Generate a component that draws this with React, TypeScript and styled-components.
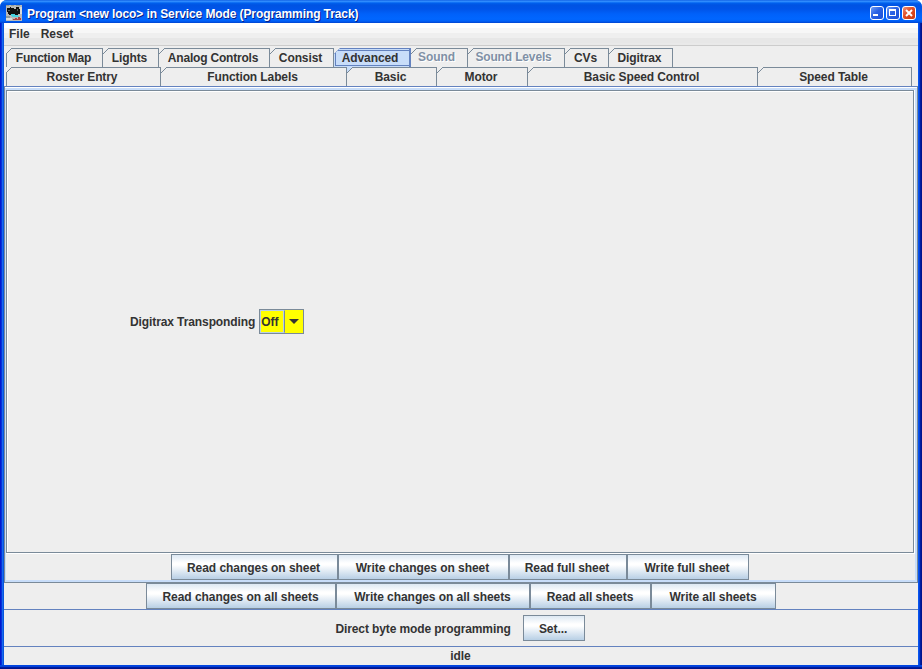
import React from "react";
import styled, { createGlobalStyle, css } from "styled-components";

const Global = createGlobalStyle`
  * { box-sizing: border-box; }
  html, body { margin: 0; background: #fff; overflow: hidden; }
`;

const Frame = styled.div`
  width: 922px;
  height: 669px;
  padding: 0 4px 4px;
  display: flex;
  flex-direction: column;
  overflow: hidden;
  border-radius: 7px 7px 0 0;
  background:
    linear-gradient(to right, #0019cf 0 1px, #0831d9 1px 2px, #166aee 2px 3px, #0855dd 3px 4px) 0 23px / 4px 642px no-repeat,
    linear-gradient(to right, #0855ee 0 1px, #0441d8 1px 2px, #001da0 2px 3px, #00138c 3px 4px) 918px 23px / 4px 642px no-repeat,
    linear-gradient(#0046e0 0 1px, #0441d8 1px 2px, #001da0 2px 3px, #00138c 3px 4px) 0 665px / 922px 4px no-repeat,
    #0055ea;
  font: bold 12px/14px "Liberation Sans", Arial, sans-serif;
  letter-spacing: -0.1px;
  color: #333;
  white-space: nowrap;
`;

const TitleBar = styled.header`
  flex: 0 0 23px;
  margin: 0 -4px;
  padding: 3px 6px 0;
  display: flex;
  align-items: center;
  background: linear-gradient(#0050dd 0, #3b94ff 1px, #2182fb 2px, #0060ee 3px, #0053e3 5px, #0054e8 9px, #0061fa 14px, #0066ff 19px, #0060f8 21px, #0043cf 23px);
`;

const Title = styled.h1`
  margin: 2px auto 0 5px;
  font: bold 12px/16px "Liberation Sans", Arial, sans-serif;
  letter-spacing: -0.1px;
  color: #fff;
  text-shadow: 1px 1px 0 #0a1f84;
`;

const WindowButton = styled.button<{ $close?: boolean }>`
  width: 14px;
  height: 14px;
  margin: 0 0 1px 2px;
  padding: 0;
  border: 1px solid #fff;
  border-radius: 3px;
  background: ${(p) =>
    p.$close
      ? "linear-gradient(135deg, #f09078, #e04c22 45%, #c83a10)"
      : "linear-gradient(135deg, #6f9df5, #2a62e4 45%, #1c4fd6)"};
  svg { display: block; }
`;

const MenuBar = styled.nav`
  flex: 0 0 23px;
  display: flex;
  gap: 11px;
  padding: 4px 5px;
  letter-spacing: 0;
  background: linear-gradient(#fff 0 5px, #f7f7f7 5px 10px, #efefef 10px 15px, #e7e7e7 15px 20px, #e9e9e9 20px 22px, #ccc 22px);
`;

const Body = styled.main`
  flex: 1;
  min-height: 0;
  padding-top: 2px;
  display: flex;
  flex-direction: column;
  background: #eee;
`;

const TabRow = styled.div<{ $columns: string }>`
  display: grid;
  grid-template-columns: ${(p) => p.$columns};
  height: 19px;
  margin-left: 2px;
`;

const TabItem = styled.div<{ $selected?: boolean; $disabled?: boolean }>`
  position: relative;
  display: flex;
  justify-content: center;
  padding: 3px 2px 0 0;
  border-right: 1px solid #7a8a99;
  background: linear-gradient(#7a8a99, #7a8a99) 6px 0 / 100% 1px no-repeat;
  &:first-child::after {
    content: "";
    position: absolute;
    left: 0;
    top: 6px;
    bottom: 0;
    border-left: 1px solid #7a8a99;
  }
  svg { position: absolute; left: 0; top: 0; }
  ${(p) => p.$selected && css`
    border-right: 2px solid #6382bf;
    background:
      linear-gradient(#6382bf, #6382bf) 6px 0 / 100% 1px no-repeat,
      linear-gradient(#6382bf, #6382bf) 4px 2px / 100% 1px no-repeat,
      linear-gradient(#6382bf, #6382bf) 1px 17px / 100% 1px no-repeat,
      linear-gradient(#6382bf, #6382bf) 1px 5px / 1px 13px no-repeat,
      #c8ddf9;
    background-clip: padding-box;
    clip-path: polygon(6px 0, 100% 0, 100% 100%, 0 100%, 0 6px);
  `}
  ${(p) => p.$disabled && css`
    padding-top: 2px;
    color: #8090a5;
    text-shadow: 1px 1px 0 #fff;
  `}
`;

const Label = styled.span<{ $shift?: number; $spacing?: number }>`
  margin-left: ${(p) => p.$shift ?? 0}px;
  letter-spacing: ${(p) => p.$spacing ?? -0.1}px;
`;

const TabBody = styled.section`
  height: 497px;
  display: flex;
  flex-direction: column;
  border: 1px solid #7a8a99;
  border-top-color: #6382bf;
  background: linear-gradient(#fff 0 1px, #eee 1px);
`;

const TabInset = styled.div`
  flex: 1;
  display: flex;
  flex-direction: column;
  border: solid #c8ddf9;
  border-width: 2px 2px 2px 1px;
  margin-top: 1px;
`;

const Sheet = styled.div`
  height: 464px;
  border-bottom: 1px solid #fff;
  border-right: 1px solid #fff;
`;

const SheetEdge = styled.div`
  height: 463px;
  border: 1px solid #7a8a99;
  box-shadow: inset 1px 1px 0 #fff;
  display: flex;
  align-items: center;
  padding-left: 123px;
`;

const Combo = styled.div`
  width: 45px;
  height: 25px;
  margin-left: 4px;
  display: flex;
  border: 1px solid #7a8a99;
  background: #ff0;
`;

const ComboValue = styled.div`
  width: 25px;
  padding: 4px 0 0 0;
  border: 1px solid #b8cfe5;
  border-right-color: #7a8a99;
  box-shadow: inset -1px 0 0 #b8cfe5;
`;

const ComboArrow = styled.div`
  flex: 1;
  padding: 9px 0 0 4px;
  svg { display: block; }
`;

const Buttons = styled.div<{ $rule?: boolean }>`
  display: flex;
  justify-content: center;
  ${(p) => (p.$rule ? "border-bottom: 1px solid #6382bf;" : "padding-right: 2px;")}
`;

const MetalButton = styled.button<{ $width: number }>`
  width: ${(p) => p.$width}px;
  height: 26px;
  padding: 2px 1px 0 0;
  border: 1px solid #7a8a99;
  background: linear-gradient(#dde8f3 0, #fff 8px, #fff 10px, #b8cfe5 100%);
  color: #333;
  font: inherit;
  letter-spacing: -0.05px;
`;

const ModeRow = styled.div`
  height: 37px;
  padding-right: 2px;
  display: flex;
  align-items: center;
  justify-content: center;
  gap: 12px;
  border-bottom: 1px solid #6382bf;
  > span { padding-top: 1px; }
`;

const Status = styled.footer`
  padding: 2px 1px 0 0;
  text-align: center;
`;

type TabData = {
  name: string;
  selected?: boolean;
  disabled?: boolean;
  shift?: number;
  spacing?: number;
  tinted?: boolean;
};

const upper: TabData[] = [
  { name: "Function Map", shift: 1, spacing: -0.22 },
  { name: "Lights" },
  { name: "Analog Controls", spacing: -0.2 },
  { name: "Consist" },
  { name: "Advanced", selected: true, shift: -1 },
  { name: "Sound", disabled: true, shift: -3 },
  { name: "Sound Levels", disabled: true, shift: -3, spacing: -0.15 },
  { name: "CVs" },
  { name: "Digitrax" },
];

const lower: TabData[] = [
  { name: "Roster Entry" },
  { name: "Function Labels" },
  { name: "Basic", tinted: true },
  { name: "Motor" },
  { name: "Basic Speed Control" },
  { name: "Speed Table" },
];

function Tabs({ items, columns }: { items: TabData[]; columns: string }) {
  return (
    <TabRow $columns={columns}>
      {items.map((t) => (
        <TabItem key={t.name} $selected={t.selected} $disabled={t.disabled}>
          <svg width="7" height="7" viewBox="0 0 7 7">
            {t.tinted && <path d="M0 0H6L0 6Z" fill="#c8ddf9" />}
            <path d="M0 6L6 0" stroke={t.selected ? "#6382bf" : "#7a8a99"} fill="none" />
          </svg>
          <Label $shift={t.shift} $spacing={t.spacing}>{t.name}</Label>
        </TabItem>
      ))}
    </TabRow>
  );
}

function LocoIcon() {
  return (
    <svg width="16" height="16" viewBox="0 0 16 16" shapeRendering="crispEdges">
      <path fill="#b9bab8" d="M0 0h16v16H0z" />
      <path fill="#8d9a9b" d="M0 0h3v1H0zM5 0h3v1H5zM10 0h4v1h-4zM0 11h4v2H0z" />
      <path fill="#d8dcda" d="M0 13h6v2H0zM14 2h2v7h-2z" />
      <path fill="#111" d="M1 3h3V2h1v1h3v1h2V2h3v2h1v5h-2v1H9V9H6v1H3V9H2V7H1z" />
      <path fill="#4e5c5e" d="M2 5h2v1H2zM11 4h1v2h-1z" />
      <path fill="#49d2df" d="M5 9h4v1h3v1h1v1H6v-1H5z" />
      <path fill="#b54242" d="M7 14h2v-1h2v1h1v-2h2v1h1v2H7z" />
    </svg>
  );
}

export default function App() {
  return (
    <>
      <Global />
      <Frame>
        <TitleBar>
          <LocoIcon />
          <Title>Program &lt;new loco&gt; in Service Mode (Programming Track)</Title>
          <WindowButton aria-label="Minimize">
            <svg width="12" height="12"><path d="M2 7h5v2H2z" fill="#fff" /></svg>
          </WindowButton>
          <WindowButton aria-label="Maximize">
            <svg width="12" height="12"><path d="M2 2h7v7H2zM3 4v4h5V4z" fill="#fff" fillRule="evenodd" /></svg>
          </WindowButton>
          <WindowButton $close aria-label="Close">
            <svg width="12" height="12"><path d="M3 3l6 6M9 3l-6 6" stroke="#fff" strokeWidth="2" /></svg>
          </WindowButton>
        </TitleBar>
        <MenuBar><span>File</span><span>Reset</span></MenuBar>
        <Body>
          <Tabs items={upper} columns="97px 56px 111px 64px 77px 57px 97px 44px 64px" />
          <Tabs items={lower} columns="155px 186px 90px 91px 230px 154px" />
          <TabBody>
            <TabInset>
              <Sheet>
                <SheetEdge>
                  <Label>Digitrax Transponding</Label>
                  <Combo>
                    <ComboValue>Off</ComboValue>
                    <ComboArrow>
                      <svg width="11" height="6"><path d="M0 0h10L5 5z" fill="#333" /></svg>
                    </ComboArrow>
                  </Combo>
                </SheetEdge>
              </Sheet>
              <Buttons>
                <MetalButton $width={167}>Read changes on sheet</MetalButton>
                <MetalButton $width={171}>Write changes on sheet</MetalButton>
                <MetalButton $width={118}>Read full sheet</MetalButton>
                <MetalButton $width={122}>Write full sheet</MetalButton>
              </Buttons>
            </TabInset>
          </TabBody>
          <Buttons $rule>
            <MetalButton $width={190}>Read changes on all sheets</MetalButton>
            <MetalButton $width={194}>Write changes on all sheets</MetalButton>
            <MetalButton $width={121}>Read all sheets</MetalButton>
            <MetalButton $width={125}>Write all sheets</MetalButton>
          </Buttons>
          <ModeRow>
            <Label>Direct byte mode programming</Label>
            <MetalButton $width={62}>Set...</MetalButton>
          </ModeRow>
          <Status>idle</Status>
        </Body>
      </Frame>
    </>
  );
}
